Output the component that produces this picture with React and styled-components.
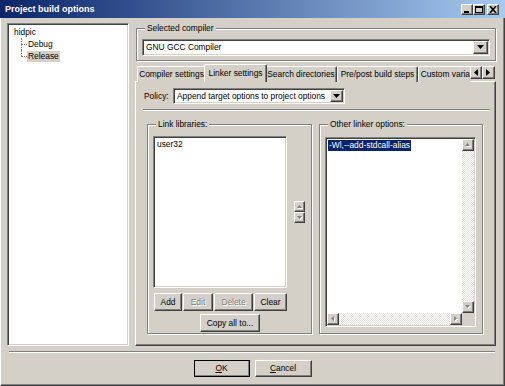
import React from 'react';
import styled, { createGlobalStyle, css } from 'styled-components';

const GlobalStyle = createGlobalStyle`
  * { box-sizing: border-box; }
  html, body { margin: 0; padding: 0; background: #d4d0c8; }
  body {
    font-family: "Liberation Sans", Arial, sans-serif;
    font-size: 8.4px;
    line-height: 11px;
    color: #000;
  }
`;

const raised = css`
  border: 1px solid;
  border-color: #fff #404040 #404040 #fff;
  box-shadow: inset -1px -1px 0 #808080;
`;

const sunken = css`
  border: 1px solid;
  border-color: #808080 #fff #fff #808080;
  box-shadow: inset 1px 1px 0 #404040, inset -1px -1px 0 #d4d0c8;
`;

const checker = css`
  background: repeating-conic-gradient(#ffffff 0 25%, #e4e1dc 0 50%) 0 0 / 2px 2px;
`;

const Window = styled.div`
  width: 505px;
  height: 386px;
  display: flex;
  flex-direction: column;
  background: #d4d0c8;
  border-left: 1px solid #fff;
  border-right: 1px solid #404040;
  border-bottom: 1px solid #404040;
  box-shadow: inset -1px -1px 0 #808080;
`;

const TitleBar = styled.div`
  height: 18px;
  margin: 0 -1px 0 -1px;
  display: flex;
  align-items: center;
  padding: 0 6px 0 5px;
  background: linear-gradient(to right, #0a246a, #a6caf0);
  color: #fff;
  font-weight: bold;
  font-size: 9px;
`;

const TitleText = styled.span`
  flex: 1;
`;

const TitleButtons = styled.div`
  display: flex;
  gap: 0;
`;

const TitleButton = styled.div`
  ${raised};
  width: 12px;
  height: 11px;
  background: #d4d0c8;
  display: flex;
  align-items: center;
  justify-content: center;
  margin-left: ${p => (p.$gap ? '2px' : '0')};
`;

const Body = styled.div`
  display: flex;
  gap: 6px;
  padding: 5px 0 0 6px;
  height: 328px;
`;

const Tree = styled.div`
  ${sunken};
  width: 122px;
  height: 323px;
  background: #fff;
  padding: 2px 0 0 5px;
`;

const TreeRow = styled.div`
  height: 12px;
  line-height: 12px;
  display: flex;
  align-items: center;
`;

const TreeChildren = styled.div`
  padding-left: 14px;
`;

const TreeChild = styled(TreeRow)`
  position: relative;
  &::before {
    content: '';
    position: absolute;
    left: -6px;
    top: 6px;
    width: 6px;
    border-top: 1px dotted #808080;
  }
  &::after {
    content: '';
    position: absolute;
    left: -6px;
    top: 0;
    height: ${p => (p.$last ? '6px' : '12px')};
    border-left: 1px dotted #808080;
  }
`;

const TreeLabel = styled.span`
  padding: 0 1px;
  line-height: 11px;
  background: ${p => (p.$selected ? '#d4d0c8' : 'transparent')};
`;

const RightColumn = styled.div`
  width: 361px;
  display: flex;
  flex-direction: column;
`;

const GroupBox = styled.fieldset`
  margin: 0 0 0 ${p => p.$ml || 0}px;
  width: ${p => p.$w}px;
  padding: ${p => p.$pad};
  border: 1px solid #808080;
  box-shadow: inset 1px 1px 0 #fff, 1px 1px 0 #fff;
  min-width: 0;
`;

const Legend = styled.legend`
  padding: 0 2px;
  margin-left: 3px;
  line-height: 11px;
  background: #d4d0c8;
`;

const Combo = styled.div`
  ${sunken};
  width: ${p => p.$w}px;
  height: ${p => p.$h}px;
  background: #fff;
  padding: 1px;
  display: flex;
  align-items: stretch;
`;

const ComboText = styled.div`
  flex: 1;
  padding-left: 2px;
  display: flex;
  align-items: center;
  white-space: nowrap;
  overflow: hidden;
`;

const DropButton = styled.div`
  ${raised};
  width: ${p => p.$w}px;
  background: #d4d0c8;
  display: flex;
  align-items: center;
  justify-content: center;
`;

const TabStrip = styled.div`
  margin-top: 3px;
  height: 18px;
  margin-bottom: -1px;
  display: flex;
  align-items: flex-start;
`;

const TabViewport = styled.div`
  flex: 1;
  height: 18px;
  overflow: hidden;
  display: flex;
  align-items: flex-end;
  padding-left: 2px;
`;

const Tab = styled.div`
  flex: none;
  width: ${p => p.$w}px;
  height: ${p => (p.$active ? 19 : 16)}px;
  margin: ${p => (p.$active ? '0 -2px' : '0')};
  margin-bottom: ${p => (p.$active ? '-1px' : '0')};
  position: relative;
  z-index: ${p => (p.$active ? 2 : 1)};
  background: #d4d0c8;
  border-top: 1px solid #fff;
  border-left: 1px solid #fff;
  border-right: 1px solid #404040;
  box-shadow: inset -1px 0 0 #808080;
  border-radius: 2px 2px 0 0;
  display: flex;
  align-items: center;
  justify-content: center;
  padding-bottom: ${p => (p.$active ? '2px' : '0')};
  white-space: nowrap;
`;

const TabScroll = styled.div`
  display: flex;
  margin-top: 2px;
  margin-right: 1px;
`;

const SmallButton = styled.div`
  ${raised};
  width: ${p => p.$w}px;
  height: ${p => p.$h}px;
  background: #d4d0c8;
  display: flex;
  align-items: center;
  justify-content: center;
  flex: none;
`;

const TabPanel = styled.div`
  flex: 1;
  border: 1px solid;
  border-color: #fff #404040 #404040 #fff;
  box-shadow: inset -1px -1px 0 #808080;
  padding: 6px 5px 0 7px;
  display: flex;
  flex-direction: column;
`;

const PolicyRow = styled.div`
  display: flex;
  align-items: center;
  padding-left: 1px;
`;

const FieldLabel = styled.span`
  width: 29px;
`;

const Etched = styled.div`
  height: 2px;
  border-top: 1px solid #808080;
  border-bottom: 1px solid #fff;
  margin: ${p => p.$m};
`;

const GroupsRow = styled.div`
  display: flex;
  gap: 7px;
  margin-top: 8px;
  padding-left: 4px;
`;

const ListRow = styled.div`
  display: flex;
  align-items: center;
`;

const ListBox = styled.div`
  ${sunken};
  width: 134px;
  height: 152px;
  background: #fff;
  padding: 2px 3px;
`;

const SpinCol = styled.div`
  display: flex;
  flex-direction: column;
  margin-left: 7px;
`;

const ButtonRow = styled.div`
  display: flex;
  gap: 1px;
  margin-top: 5px;
  padding-left: 1px;
`;

const CenterRow = styled.div`
  display: flex;
  justify-content: center;
  gap: ${p => p.$gap || 0}px;
  margin-top: ${p => p.$mt}px;
`;

const PushButton = styled.button`
  ${raised};
  ${p =>
    p.$default &&
    css`
      outline: 1px solid #000;
      outline-offset: -1px;
    `}
  width: ${p => p.$w}px;
  height: ${p => p.$h || 18}px;
  padding: 0;
  background: #d4d0c8;
  font: inherit;
  color: ${p => (p.disabled ? '#808080' : '#000')};
  text-shadow: ${p => (p.disabled ? '1px 1px 0 #fff' : 'none')};
  display: flex;
  align-items: center;
  justify-content: center;
`;

const EditBox = styled.div`
  ${sunken};
  width: 151px;
  height: 190px;
  background: #fff;
  padding: 1px;
  display: grid;
  grid-template-columns: 1fr 12px;
  grid-template-rows: 1fr 12px;
`;

const EditText = styled.div`
  padding: 1px 0 0 1px;
  white-space: nowrap;
  overflow: hidden;
`;

const Selected = styled.span`
  background: #0a246a;
  color: #fff;
  padding: 0 1px 1px 1px;
`;

const ScrollBar = styled.div`
  display: flex;
  flex-direction: ${p => (p.$vertical ? 'column' : 'row')};
`;

const Track = styled.div`
  flex: 1;
  ${checker};
`;

const Corner = styled.div`
  background: #d4d0c8;
`;

const Underline = styled.span`
  text-decoration: underline;
`;

const Tri = ({ dir, color = '#000', size = 4 }) => {
  const s = size;
  let pts;
  let w;
  let h;
  if (dir === 'down') { w = s * 2 - 1; h = s; pts = `0,0 ${w},0 ${w / 2},${h}`; }
  else if (dir === 'up') { w = s * 2 - 1; h = s; pts = `0,${h} ${w},${h} ${w / 2},0`; }
  else if (dir === 'left') { w = s; h = s * 2 - 1; pts = `${w},0 ${w},${h} 0,${h / 2}`; }
  else { w = s; h = s * 2 - 1; pts = `0,0 0,${h} ${w},${h / 2}`; }
  const disabled = color !== '#000';
  return (
    <svg width={w + 1} height={h + 1} viewBox={`0 0 ${w + 1} ${h + 1}`}>
      {disabled && <polygon points={pts} fill="#fff" transform="translate(1,1)" />}
      <polygon points={pts} fill={color} />
    </svg>
  );
};

const MinIcon = () => (
  <svg width="8" height="7" viewBox="0 0 8 7">
    <rect x="1" y="5" width="5" height="2" fill="#000" />
  </svg>
);
const MaxIcon = () => (
  <svg width="8" height="7" viewBox="0 0 8 7">
    <rect x="0.5" y="0.5" width="7" height="6" fill="none" stroke="#000" />
    <rect x="0" y="0" width="8" height="2" fill="#000" />
  </svg>
);
const CloseIcon = () => (
  <svg width="8" height="7" viewBox="0 0 8 7">
    <path d="M1 0 L7 7 M7 0 L1 7" stroke="#000" strokeWidth="1.6" />
  </svg>
);

const tabs = [
  { label: 'Compiler settings', w: 69 },
  { label: 'Linker settings', w: 63, active: true },
  { label: 'Search directories', w: 72 },
  { label: 'Pre/post build steps', w: 81 },
  { label: 'Custom variables', w: 70 },
];

export default function App() {
  return (
    <>
      <GlobalStyle />
      <Window>
        <TitleBar>
          <TitleText>Project build options</TitleText>
          <TitleButtons>
            <TitleButton><MinIcon /></TitleButton>
            <TitleButton><MaxIcon /></TitleButton>
            <TitleButton $gap><CloseIcon /></TitleButton>
          </TitleButtons>
        </TitleBar>
        <Body>
          <Tree>
            <TreeRow><TreeLabel>hidpic</TreeLabel></TreeRow>
            <TreeChildren>
              <TreeChild><TreeLabel>Debug</TreeLabel></TreeChild>
              <TreeChild $last><TreeLabel $selected>Release</TreeLabel></TreeChild>
            </TreeChildren>
          </Tree>
          <RightColumn>
            <GroupBox $w={360} $ml={1} $pad="5px 5px 4px 5px">
              <Legend>Selected compiler</Legend>
              <Combo $w={348} $h={17}>
                <ComboText>GNU GCC Compiler</ComboText>
                <DropButton $w={15}><Tri dir="down" /></DropButton>
              </Combo>
            </GroupBox>
            <TabStrip>
              <TabViewport>
                {tabs.map(t => (
                  <Tab key={t.label} $w={t.w} $active={t.active}>{t.label}</Tab>
                ))}
              </TabViewport>
              <TabScroll>
                <SmallButton $w={12} $h={13}><Tri dir="left" size={4} /></SmallButton>
                <SmallButton $w={13} $h={13}><Tri dir="right" size={4} /></SmallButton>
              </TabScroll>
            </TabStrip>
            <TabPanel>
              <PolicyRow>
                <FieldLabel>Policy:</FieldLabel>
                <Combo $w={172} $h={16}>
                  <ComboText>Append target options to project options</ComboText>
                  <DropButton $w={13}><Tri dir="down" /></DropButton>
                </Combo>
              </PolicyRow>
              <Etched $m="5px 0 0 0" />
              <GroupsRow>
                <GroupBox $w={165} $pad="6px 4px 1px 5px">
                  <Legend>Link libraries:</Legend>
                  <ListRow>
                    <ListBox>user32</ListBox>
                    <SpinCol>
                      <SmallButton $w={11} $h={11}><Tri dir="up" size={3} color="#808080" /></SmallButton>
                      <SmallButton $w={11} $h={11}><Tri dir="down" size={3} color="#808080" /></SmallButton>
                    </SpinCol>
                  </ListRow>
                  <ButtonRow>
                    <PushButton $w={28}>Add</PushButton>
                    <PushButton $w={30} disabled>Edit</PushButton>
                    <PushButton $w={39} disabled>Delete</PushButton>
                    <PushButton $w={33}>Clear</PushButton>
                  </ButtonRow>
                  <CenterRow $mt={3}>
                    <PushButton $w={60}>Copy all to...</PushButton>
                  </CenterRow>
                </GroupBox>
                <GroupBox $w={164} $pad="7px 5px 6px 5px">
                  <Legend>Other linker options:</Legend>
                  <EditBox>
                    <EditText><Selected>-Wl,--add-stdcall-alias</Selected></EditText>
                    <ScrollBar $vertical>
                      <SmallButton $w={12} $h={12}><Tri dir="up" size={3} color="#808080" /></SmallButton>
                      <Track />
                      <SmallButton $w={12} $h={12}><Tri dir="down" size={3} color="#808080" /></SmallButton>
                    </ScrollBar>
                    <ScrollBar>
                      <SmallButton $w={12} $h={12}><Tri dir="left" size={3} color="#808080" /></SmallButton>
                      <Track />
                      <SmallButton $w={12} $h={12}><Tri dir="right" size={3} color="#808080" /></SmallButton>
                    </ScrollBar>
                    <Corner />
                  </EditBox>
                </GroupBox>
              </GroupsRow>
            </TabPanel>
          </RightColumn>
        </Body>
        <Etched $m="5px 9px 0 8px" />
        <CenterRow $mt={7} $gap={5}>
          <PushButton $w={56} $h={17} $default><span><Underline>O</Underline>K</span></PushButton>
          <PushButton $w={57} $h={17}><span><Underline>C</Underline>ancel</span></PushButton>
        </CenterRow>
      </Window>
    </>
  );
}
